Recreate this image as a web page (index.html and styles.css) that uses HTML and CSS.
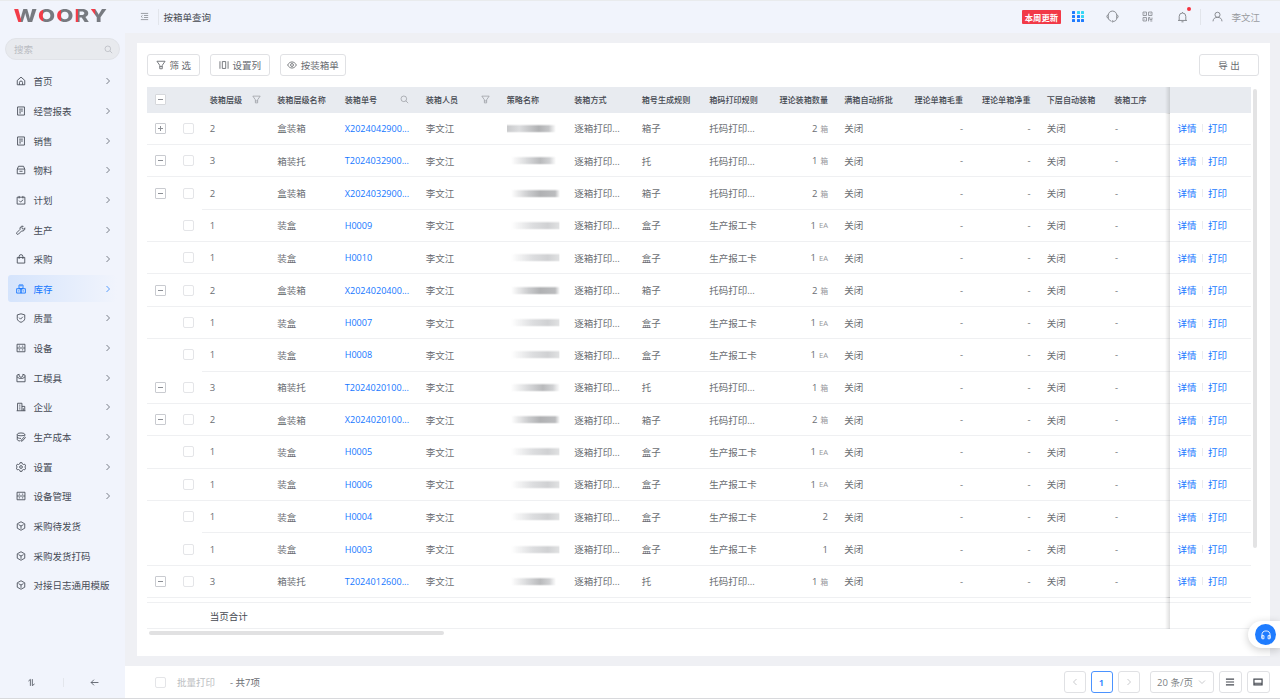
FILE: index.html
```html
<!DOCTYPE html>
<html lang="zh-CN">
<head>
  <meta charset="UTF-8" />
  <meta name="viewport" content="width=device-width, initial-scale=1.0" />
  <title>按箱单查询</title>
  <link rel="stylesheet" href="styles.css">
</head>
<body>
  <svg class="sprite">
    <symbol id="i-home" viewBox="0 0 16 16"><path d="M2 7 8 1.8 14 7v7H2zM5.5 14v-3.5a2.5 2.5 0 0 1 5 0V14"/></symbol>
    <symbol id="i-doc" viewBox="0 0 16 16"><path d="M2.5 1.5h11v13h-11zM5 5h6M5 8h6M5 11h3"/></symbol>
    <symbol id="i-box" viewBox="0 0 16 16"><path d="M2 6.5h12v7.5H2zM2 6.5 4 2h8l2 4.5M5.5 10h5"/></symbol>
    <symbol id="i-plan" viewBox="0 0 16 16"><path d="M1.8 3.5h12.4v11H1.8zM5 1.5v4M11 1.5v4M5 9l2.3 2.3L11.500 7.500"/></symbol>
    <symbol id="i-wrench" viewBox="0 0 16 16"><path d="M14 4.500 11.500 7 9 4.500 11.500 2A4 4 0 0 0 6.500 7L1.500 12a1.500 1.500 0 0 0 2.500 2.500L9 9.500A4 4 0 0 0 14 4.500z"/></symbol>
    <symbol id="i-bag" viewBox="0 0 16 16"><path d="M2 5.500h12v9H2zM5 8V4a3 3 0 0 1 6 0v4"/></symbol>
    <symbol id="i-stock" viewBox="0 0 16 16"><path d="M4.800 1.500h6.400v6H4.800zM1 7.500h7v7H1zM8 7.500h7v7H8zM8 1.500v2.500M4.500 10v2M11.500 10v2"/></symbol>
    <symbol id="i-shield" viewBox="0 0 16 16"><path d="M8 1.300 14 3v6c0 3-3 4.800-6 5.900C5 13.800 2 12 2 9V3zM5 7.500l2.300 2.300L11 6"/></symbol>
    <symbol id="i-device" viewBox="0 0 16 16"><path d="M1.700 2h12.600v12H1.700zM1.700 8h12.600M4.500 5h2M9.500 5h2M4.500 11h2M9.500 11h2"/></symbol>
    <symbol id="i-mold" viewBox="0 0 16 16"><path d="M1.500 14V3.500L5 2v3l3 2 3-2V2l3.500 1.500V14zM1.500 6 5 8.500h6L14.500 6"/></symbol>
    <symbol id="i-company" viewBox="0 0 16 16"><path d="M2.500 14V2h7v12M9.500 7H14v7M1 14h14M5 5h2M5 8h2M5 11h2M11.700 10v4"/></symbol>
    <symbol id="i-cost" viewBox="0 0 16 16"><ellipse cx="8" cy="3.800" rx="6" ry="2.300"/><path d="M2 4v8c0 1.300 2 2.200 4.500 2.400M2 8c0 1.300 3 2.300 6 2.300M14 4v2.500M8 13.500l5.500-6 1.500 1.500-5 5.500H8z"/></symbol>
    <symbol id="i-gear" viewBox="0 0 16 16"><path d="M6.500 1h3l.6 2 1.900 1 2-.5L15.500 6.200 14 8l1.500 1.800L14 12.500l-2-.5-1.900 1-.6 2h-3l-.6-2L4 12l-2 .5L.500 9.800 2 8 .500 6.200 2 3.500l2 .5 1.900-1z"/><circle cx="8" cy="8" r="2.200"/></symbol>
    <symbol id="i-cube" viewBox="0 0 16 16"><path d="M8 1.200 14 4.500v7L8 14.800 2 11.500v-7zM4 5.800 8 8l4-2.200M8 8v4.500"/></symbol>
    <symbol id="i-right" viewBox="0 0 16 16"><path d="M5 2l6 6-6 6"/></symbol>
    <symbol id="i-left" viewBox="0 0 16 16"><path d="M11 2 5 8l6 6"/></symbol>
    <symbol id="i-down" viewBox="0 0 16 16"><path d="M2 5l6 6 6-6"/></symbol>
    <symbol id="i-search" viewBox="0 0 16 16"><circle cx="6.800" cy="6.800" r="5"/><path d="M10.500 10.500l4 4"/></symbol>
    <symbol id="i-filter" viewBox="0 0 16 16"><path d="M1.500 2h13L10 8.500V14H6V8.500zM6 10.500h4"/></symbol>
    <symbol id="i-cols" viewBox="0 0 16 16"><path d="M1.500 2v12M14.500 2v12M5.300 2.500h5.400v11H5.300z"/></symbol>
    <symbol id="i-eye" viewBox="0 0 16 16"><path d="M1 8c3.500-6.500 10.500-6.500 14 0-3.500 6.500-10.500 6.500-14 0z"/><circle cx="8" cy="8" r="2.300"/></symbol>
    <symbol id="i-fold" viewBox="0 0 16 16"><path d="M1.500 2.500h13M7 6.200h7.500M7 9.800h7.500M1.500 13.500h13M4.500 6 2 8l2.500 2"/></symbol>
    <symbol id="i-swap" viewBox="0 0 16 16"><path d="M2.500 5.500 6 2.500V14M9.500 2v11.500L13.500 10.500"/></symbol>
    <symbol id="i-back" viewBox="0 0 16 16"><path d="M15 8H2M7 3 2 8l5 5"/></symbol>
    <symbol id="i-headset" viewBox="0 0 16 16"><path d="M2.800 10V6.500a5.200 5.200 0 0 1 10.400 0V10M2.800 6C.5 6 .5 10 2.800 10M13.200 6c2.300 0 2.300 4 0 4M13.200 10c0 2.500-2 4-4 4M2.800 10c.5 2 1.700 3 3.500 3.500"/><circle cx="8.200" cy="14" r=".8"/></symbol>
    <symbol id="i-qr" viewBox="0 0 16 16"><path d="M1.500 1.500h5v5h-5zM9.500 1.500h5v5h-5zM1.500 9.500h5v5h-5zM3.500 4h1M11.500 4h1M3.500 12h1M9.500 15V9.500h2v3h3v-3M12 14.500h3"/></symbol>
    <symbol id="i-bell" viewBox="0 0 16 16"><path d="M1.500 13h13M3.200 13V7a4.800 4.800 0 0 1 9.600 0v6M8 2.200V.8M6.500 15h3"/></symbol>
    <symbol id="i-user" viewBox="0 0 16 16"><circle cx="8" cy="5.500" r="3.700"/><path d="M1.500 15c0-3.500 2.500-5.800 6.500-5.800s6.500 2.300 6.500 5.800"/></symbol>
    <symbol id="i-phones" viewBox="0 0 16 16"><path d="M1.500 13V8a6.500 6.500 0 0 1 13 0v5M1.500 9h3.200v5H1.500zM11.300 9h3.200v5h-3.200z"/></symbol>
    <symbol id="i-rows" viewBox="0 0 16 16"><path d="M1.500 3.500h13M1.500 8h13M1.500 12.500h13"/></symbol>
    <symbol id="i-panel" viewBox="0 0 16 16"><path d="M1.500 3.500h13v9h-13zM1.500 10h13"/></symbol>
  </svg>

  <div class="app">
    <aside class="sidebar">
      <div class="logo"><span>W</span><span>O</span><span>O</span><span>R</span><span>Y</span></div>
      <div class="search">搜索<svg class="icon"><use href="#i-search"/></svg></div>
      <nav id="menu"></nav>
      <div class="side-foot">
        <svg class="icon"><use href="#i-swap"/></svg>
        <i></i>
        <svg class="icon"><use href="#i-back"/></svg>
      </div>
    </aside>

    <div class="main">
      <header class="topbar">
        <svg class="icon fold"><use href="#i-fold"/></svg>
        <i class="sep"></i>
        <span class="title">按箱单查询</span>
        <span class="tag">本周更新</span>
        <div class="apps"><i></i><i></i><i></i><i></i><i></i><i></i><i></i><i></i><i></i></div>
        <svg class="icon headset"><use href="#i-headset"/></svg>
        <svg class="icon qr"><use href="#i-qr"/></svg>
        <div class="bell"><svg class="icon"><use href="#i-bell"/></svg><b></b></div>
        <i class="sep"></i>
        <svg class="icon user"><use href="#i-user"/></svg>
        <span class="name">李文江</span>
      </header>

      <section class="card">
        <div class="toolbar">
          <button class="btn b1"><svg class="icon"><use href="#i-filter"/></svg>筛 选</button>
          <button class="btn b2"><svg class="icon"><use href="#i-cols"/></svg>设置列</button>
          <button class="btn b3"><svg class="icon"><use href="#i-eye"/></svg>按装箱单</button>
          <button class="btn export">导 出</button>
        </div>
        <div class="table-wrap">
          <div class="table">
            <div class="row head">
              <div class="cell ctl"><span class="tree minus"></span></div>
              <div class="cell ctl"></div>
              <div class="cell">装箱层级<svg class="icon"><use href="#i-filter"/></svg></div>
              <div class="cell">装箱层级名称</div>
              <div class="cell">装箱单号<svg class="icon"><use href="#i-search"/></svg></div>
              <div class="cell">装箱人员<svg class="icon"><use href="#i-filter"/></svg></div>
              <div class="cell">策略名称</div>
              <div class="cell">装箱方式</div>
              <div class="cell">箱号生成规则</div>
              <div class="cell">箱码打印规则</div>
              <div class="cell num">理论装箱数量</div>
              <div class="cell">满箱自动拆批</div>
              <div class="cell num">理论单箱毛重</div>
              <div class="cell num">理论单箱净重</div>
              <div class="cell">下层自动装箱</div>
              <div class="cell">装箱工序</div>
              <div class="cell act"></div>
            </div>
            <div id="rows"></div>
            <div class="row total">
              <div class="cell ctl"></div>
              <div class="cell ctl"></div>
              <div class="cell sum">当页合计</div>
              <div class="cell act"></div>
            </div>
          </div>
          <div class="vscroll"></div>
        </div>
        <div class="hscroll"></div>
      </section>

      <footer class="footer">
        <span class="check"></span>
        <span class="batch">批量打印</span>
        <span class="count">- 共7项</span>
        <button class="page"><svg class="icon"><use href="#i-left"/></svg></button>
        <button class="page on">1</button>
        <button class="page"><svg class="icon"><use href="#i-right"/></svg></button>
        <button class="page size">20 条/页<svg class="icon"><use href="#i-down"/></svg></button>
        <button class="page view"><svg class="icon"><use href="#i-rows"/></svg></button>
        <button class="page view last"><svg class="icon"><use href="#i-panel"/></svg></button>
      </footer>
    </div>
  </div>
  <div class="help"><span><svg class="icon"><use href="#i-phones"/></svg></span></div>

  <script>
    const menu = [
      ["home", "首页"], ["doc", "经营报表"], ["doc", "销售"], ["box", "物料"],
      ["plan", "计划"], ["wrench", "生产"], ["bag", "采购"], ["stock", "库存"],
      ["shield", "质量"], ["device", "设备"], ["mold", "工模具"], ["company", "企业"],
      ["cost", "生产成本"], ["gear", "设置"], ["device", "设备管理"],
      ["cube", "采购待发货"], ["cube", "采购发货打码"], ["cube", "对接日志通用模版"],
    ];
    const icon = id => `<svg class="icon"><use href="#i-${id}"/></svg>`;

    document.getElementById("menu").innerHTML = menu.map(([id, text]) =>
      `<a class="item${text === "库存" ? " active" : ""}">${icon(id)}<span>${text}</span>${id === "cube" ? "" : icon("right")}</a>`
    ).join("");

    // 展开状态, 层级, 单号, 数量, 单位, 遮罩样式
    const data = [
      ["plus", 2, "X2024042900...", 2, "箱", "first"],
      ["minus", 3, "T2024032900...", 1, "箱", "mid short"],
      ["minus", 2, "X2024032900...", 2, "箱", "dark", "cut"],
      ["", 1, "H0009", 1, "EA", ""],
      ["", 1, "H0010", 1, "EA", ""],
      ["minus", 2, "X2024020400...", 2, "箱", "dark"],
      ["", 1, "H0007", 1, "EA", ""],
      ["", 1, "H0008", 1, "EA", "", "cut"],
      ["minus", 3, "T2024020100...", 1, "箱", "mid"],
      ["minus", 2, "X2024020100...", 2, "箱", "dark"],
      ["", 1, "H0005", 1, "EA", ""],
      ["", 1, "H0006", 1, "EA", ""],
      ["", 1, "H0004", 2, "", "", "cut"],
      ["", 1, "H0003", 1, "", ""],
      ["minus", 3, "T2024012600...", 1, "箱", "mid short"],
    ];
    const names = { 1: "装盒", 2: "盒装箱", 3: "箱装托" };
    const rules = { 1: "盒子", 2: "箱子", 3: "托" };

    document.getElementById("rows").innerHTML = data.map(([tree, level, no, qty, unit, mask, cut]) => `
      <div class="row ${cut || ""}">
        <div class="cell ctl">${tree ? `<span class="tree ${tree}"></span>` : ""}</div>
        <div class="cell ctl"><span class="check"></span></div>
        <div class="cell">${level}</div>
        <div class="cell">${names[level]}</div>
        <div class="cell link">${no}</div>
        <div class="cell">李文江</div>
        <div class="cell"><span class="mask ${mask}"></span></div>
        <div class="cell">逐箱打印...</div>
        <div class="cell">${rules[level]}</div>
        <div class="cell">${level === 1 ? "生产报工卡" : "托码打印..."}</div>
        <div class="cell num">${qty}${unit ? `<small>${unit}</small>` : ""}</div>
        <div class="cell">关闭</div>
        <div class="cell num">-</div>
        <div class="cell num">-</div>
        <div class="cell">关闭</div>
        <div class="cell dash">-</div>
        <div class="cell act"><a>详情</a><i></i><a>打印</a></div>
      </div>`).join("");
  </script>
</body>
</html>
```

FILE: styles.css
```css
* {
  box-sizing: border-box;
}
body {
  margin: 0;
  font-family: "Open Sans", "Noto Sans CJK SC", sans-serif;
  font-size: 9.500px;
  color: #6b6e73;
  background: #eff0f4;
  overflow: hidden;
}
.sprite {
  display: none;
}
.icon {
  width: 10px;
  height: 10px;
  flex: none;
  fill: none;
  stroke: currentColor;
  stroke-width: 1.4;
}
.app {
  display: flex;
  height: 699px;
  border-top: 1px solid #e9ebed;
  border-bottom: 1px solid #d8d9dc;
}

/* 侧边栏 */
.sidebar {
  width: 125px;
  flex: none;
  display: flex;
  flex-direction: column;
  background: #f1f4fc;
  color: #464b56;
}
.logo {
  display: flex;
  gap: 0.800px;
  height: 37px;
  padding: 5px 0 0 13.500px;
  font: 800 17.500px/20px Inter, sans-serif;
  transform: scaleX(1.270);
  transform-origin: 13.500px 0;
}
.logo span {
  color: transparent;
  background: linear-gradient(90deg, #f23c48 30%, #777a80 30%);
  -webkit-background-clip: text;
  background-clip: text;
}
.search {
  display: flex;
  align-items: center;
  justify-content: space-between;
  height: 22px;
  width: 115px;
  margin-left: 5px;
  padding: 0 6px 0 8px;
  border: 1px solid #e1e3e8;
  border-radius: 11px;
  background: #e8eaee;
  color: #b9bcc2;
}
.search .icon {
  width: 9px;
  height: 9px;
}
#menu {
  padding: 8px 8px 0;
}
.item {
  display: flex;
  align-items: center;
  height: 26.700px;
  margin-bottom: 2.960px;
  padding: 0 5px 0 8px;
  border-radius: 3px;
}
.item span {
  flex: 1;
  margin-left: 7.500px;
  white-space: nowrap;
}
.item .icon:last-child {
  width: 8px;
  height: 8px;
}
.item.active {
  color: #1677ff;
  background: linear-gradient(90deg, #d5e4fc, #f1f4fc);
}
.side-foot {
  display: flex;
  align-items: center;
  justify-content: space-between;
  height: 32px;
  margin-top: auto;
  padding: 0 26px 0 27px;
}
.side-foot .icon {
  width: 9px;
  height: 9px;
}
.side-foot i {
  width: 1px;
  height: 9px;
  background: #e3e6ec;
}

/* 顶栏 */
.main {
  flex: 1;
  min-width: 0;
  display: flex;
  flex-direction: column;
}
.topbar {
  display: flex;
  align-items: center;
  height: 32px;
  flex: none;
  padding: 0 20px 1px 14.500px;
  background: #f1f4fc;
  color: #85888e;
}
.topbar .sep {
  width: 1px;
  height: 16px;
  background: #e2e5eb;
}
.fold {
  width: 9px;
  height: 9px;
  margin-right: 9px;
}
.title {
  margin-left: 5px;
  color: #464a52;
}
.tag {
  margin-left: auto;
  width: 39px;
  height: 14px;
  border-radius: 1px;
  background: #f23947;
  color: #fff;
  font: bold 8.300px/14px "Noto Sans CJK SC", sans-serif;
  text-align: center;
}
.apps {
  display: grid;
  grid-template-columns: repeat(3, 3px);
  gap: 1.300px;
  margin: 0 22.500px 0 11.500px;
}
.apps i {
  height: 3px;
  border-radius: 0.500px;
  background: #1f7cff;
}
.apps i:nth-child(2),
.apps i:nth-child(3),
.apps i:nth-child(6) {
  background: #35d5f5;
}
.headset,
.qr {
  width: 13px;
  height: 13px;
  stroke-width: 1.200;
}
.headset {
  margin-right: 23px;
}
.qr {
  width: 11px;
  height: 11px;
}
.bell {
  position: relative;
  height: 12px;
  margin: 0 12px 0 24px;
}
.bell .icon {
  display: block;
  width: 11px;
  height: 12px;
}
.bell b {
  position: absolute;
  top: -4px;
  right: -3px;
  width: 4px;
  height: 4px;
  border-radius: 50%;
  background: #f5323f;
}
.user {
  width: 11px;
  height: 11px;
  margin: 0 8.500px 0 10.500px;
}
.name {
  color: #9a9ca1;
}

/* 内容卡片 */
.card {
  flex: none;
  height: 613px;
  margin: 10px 10px 10px 12px;
  padding: 11px 0 0 10px;
  background: #fff;
}
.toolbar {
  display: flex;
  gap: 10px;
  height: 22px;
  padding-right: 11px;
}
.btn,
.page {
  display: flex;
  align-items: center;
  justify-content: center;
  height: 22px;
  padding: 0;
  border: 1px solid #e0e1e4;
  border-radius: 3px;
  background: #fff;
  color: #686b70;
  font: inherit;
}
.btn .icon {
  margin-right: 3.500px;
}
.b1 {
  width: 53px;
}
.b2 {
  width: 60px;
}
.b3 {
  width: 66px;
}
.export {
  width: 60px;
  margin-left: auto;
}
.table-wrap {
  display: flex;
  margin-top: 11px;
}
.table {
  width: 1104px;
}
.row {
  display: grid;
  grid-template-columns: 27.500px 27.500px 67.500px 67.500px 81px 81px repeat(9, 67.500px) 63px 81px;
  height: 32.370px;
}
.cell {
  display: flex;
  align-items: center;
  padding: 0 7px 0 7.700px;
  border-bottom: 1px solid #eff0f2;
  white-space: nowrap;
}
.cell.ctl {
  padding: 0;
  justify-content: center;
}
.cut .ctl {
  border-bottom-color: transparent;
}
.cell.num {
  justify-content: flex-end;
  padding-right: 8.500px;
}
.cell small {
  margin-left: 3px;
  font-size: 7.600px;
  color: #96989d;
}
.link,
.act a {
  color: #1677ff;
}
.cell.link {
  font-size: 9.100px;
}
.cell.dash {
  padding-left: 8.500px;
}
.cell.act {
  position: relative;
  padding-left: 8px;
}
.cell.act::before {
  content: "";
  position: absolute;
  top: 0;
  bottom: -1px;
  left: -5px;
  width: 5px;
  background: linear-gradient(90deg, transparent, rgba(0, 0, 0, 0.130));
}
.total .act::before {
  top: -6px;
}
.act i {
  width: 1px;
  height: 8px;
  margin: 0 5.500px 0 5px;
  background: #ebecee;
}
.head {
  height: 25.700px;
  font-size: 8.100px;
  font-weight: 500;
  color: #43474f;
}
.head .cell {
  background: #e8ebf0;
  border-bottom: 0;
}
.head .icon {
  width: 9px;
  height: 9px;
  margin-left: auto;
  color: #909399;
  stroke-width: 1.200;
}
.head .cell:nth-child(3) {
  padding-right: 9px;
}
.head .cell:nth-child(5),
.head .cell:nth-child(6) {
  padding-right: 9.500px;
}
.total {
  height: 27px;
  margin-top: 4px;
  color: #464a52;
}
.total .cell {
  border-top: 1px solid #eff0f2;
}
.total .sum {
  grid-column: 3 / 17;
}
.check,
.tree {
  display: block;
  flex: none;
  width: 11px;
  height: 11px;
  border: 1px solid #e4e5e8;
  border-radius: 2px;
  background: #fff;
}
.tree {
  border-color: #c9cbd0;
  border-radius: 1px;
  background: linear-gradient(#8c8f95, #8c8f95) center / 5px 1px no-repeat #fff;
}
.tree.plus {
  background:
    linear-gradient(#8c8f95, #8c8f95) center / 5px 1px no-repeat,
    linear-gradient(#8c8f95, #8c8f95) center / 1px 5px no-repeat #fff;
}
.head .tree {
  border-color: #d6d8dc;
}
/* 策略名称打码 */
.mask {
  width: 49px;
  height: 9px;
  margin-left: 4px;
  flex: none;
  background: linear-gradient(90deg, transparent, #dcdddf 45%, #d0d1d3 75%, #dfe0e1 97%, transparent);
  -webkit-mask: linear-gradient(transparent, #000 25%, #000 80%, transparent);
  mask: linear-gradient(transparent, #000 25%, #000 80%, transparent);
}
.mask.mid {
  background: linear-gradient(90deg, transparent, #d3d4d6 40%, #b9babc 65%, #d0d1d3 85%, transparent);
}
.mask.short {
  width: 45px;
}
.mask.dark {
  background: linear-gradient(90deg, transparent, #cbccce 35%, #b0b1b3 60%, #bbbcbe 90%, transparent);
}
.mask.first {
  margin-left: 0;
  background: linear-gradient(90deg, #c9cacc, #dcdddf 25%, #b0b1b3 65%, #c5c6c8 85%, transparent);
}
.vscroll {
  width: 4px;
  height: 459px;
  margin: 2px 0 0 2px;
  border-radius: 2px;
  background: #e3e3e4;
}
.hscroll {
  width: 295px;
  height: 4px;
  margin: 2px 0 0 2px;
  border-radius: 2px;
  background: #e1e1e2;
}

/* 底栏 */
.footer {
  flex: 1;
  display: flex;
  align-items: center;
  padding: 0 10.500px 0 30px;
  background: #fff;
}
.batch {
  margin-left: 11px;
  color: #bcbec2;
}
.count {
  margin: 0 auto 0 15px;
}
.page {
  width: 22px;
  margin-left: 5px;
  color: #b3b5b9;
}
.page .icon {
  width: 8px;
  height: 8px;
}
.page.on {
  border-color: #4b93ff;
  color: #1677ff;
  font-weight: 600;
}
.page.size {
  width: 64px;
  margin-left: 10px;
  color: #7c7f84;
}
.size .icon {
  margin-left: 5px;
  color: #b3b5b9;
}
.page.view {
  width: 23px;
  color: #454951;
}
.view .icon {
  width: 10px;
  height: 10px;
  stroke-width: 1.900;
}

.help {
  position: absolute;
  right: 0;
  top: 621px;
  display: flex;
  align-items: center;
  width: 32px;
  height: 27px;
  padding-left: 7px;
  border-radius: 14px 0 0 14px;
  background: #fff;
  box-shadow: 0 2px 8px rgba(0, 0, 0, 0.200);
}
.help span {
  display: flex;
  align-items: center;
  justify-content: center;
  width: 21px;
  height: 21px;
  border-radius: 50%;
  background: #1f7cff;
  color: #fff;
}
```
